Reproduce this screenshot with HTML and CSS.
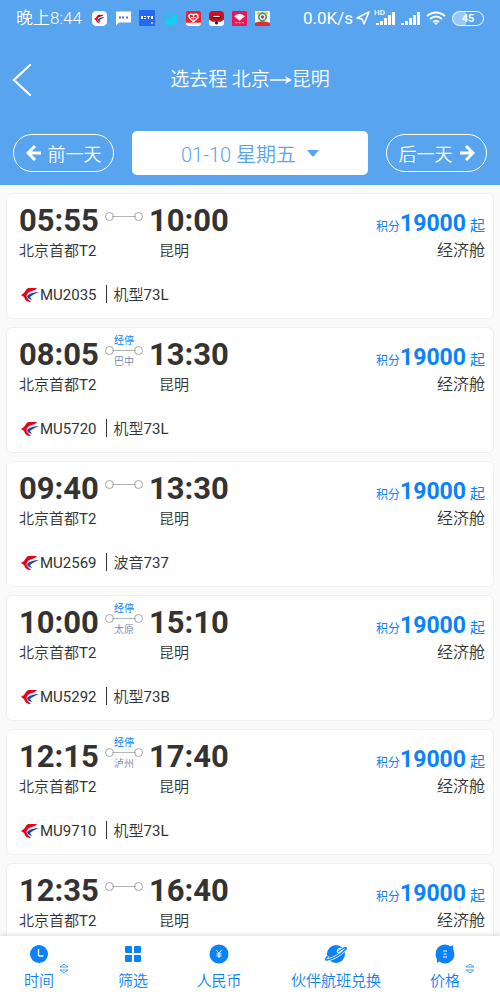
FILE: index.html
```html
<!DOCTYPE html>
<html lang="zh-CN">
<head>
  <meta charset="UTF-8">
  <meta name="viewport" content="width=device-width, initial-scale=1.0">
  <title>选去程 北京→昆明</title>
  <link rel="stylesheet" href="styles.css">
</head>
<body>

<svg class="sprite" aria-hidden="true">
  <symbol id="swallow" viewBox="0 0 18 16">
    <path d="M16 1H8Q6 1 5 3L3 6 0 8l3 2c1 3 3 5 7 5L7 12C5 10 5 8 7 6c2-2 5-2 7-3z" fill="#e60019"/>
    <path d="M18 5C13 5 9 6 6 9c0 2 2 3 5 4L9 10c2-2 5-3 9-5z" fill="#1d4a9c"/>
  </symbol>
  <symbol id="signal" viewBox="0 0 19 14">
    <path d="M0 14v-2h3v2zM4 14v-4h3v4zM8 14V7h3v7zM12 14V4h3v10zM16 14V1h3v13z" fill="#fff"/>
  </symbol>
  <symbol id="sort" viewBox="0 0 10 11">
    <path d="M1 4l4-3 4 3zM1 7l4 3 4-3z" fill="none" stroke="#4aa0f5" stroke-width="1"/>
  </symbol>
</svg>

<header class="header">
  <div class="status">
    <div class="status-left">
      <span class="clock">晚上8:44</span>
      <svg class="app" viewBox="0 0 14 14"><rect width="14" height="14" rx="4" fill="#fff"/><use href="#swallow" x="2" y="3" width="10" height="9"/></svg>
      <svg class="app app-chat" viewBox="0 0 16 15"><path d="M1 1h15v11H4l-3 3z" fill="#fff"/><path d="M4 6h2v2H4zM7 6h2v2H7zM11 6h2v2h-2z" fill="#4778cc"/></svg>
      <svg class="app app-blue" viewBox="0 0 16 16"><rect width="16" height="16" rx="1" fill="#2468f2"/><path d="M2 6h2v3H2zM5 6h2v1H5zM5 8h2v1H5zM8 6h3v1H8zM9 7h1v2H9zM12 6h2v3h-2z" fill="#fff"/><circle cx="13" cy="13" r="1" fill="#ffd84a"/></svg>
      <svg class="app" viewBox="0 0 14 14"><circle cx="7" cy="7" r="6.5" fill="#18cdec"/><path d="M1 10C-1 2 7-2 12 3z" fill="#3db2f0"/></svg>
      <svg class="app" viewBox="0 0 14 14"><rect width="14" height="14" rx="2" fill="#e6232e"/><path d="M7 10L3 6c-1-3 2-4 4-2 2-2 5-1 4 2z" fill="none" stroke="#fff" stroke-width="1.3"/><path d="M5 6h4M7 5v3" stroke="#fff"/><path d="M0 11h14v1a2 2 0 0 1-2 2H2a2 2 0 0 1-2-2z" fill="#fff"/></svg>
      <svg class="app" viewBox="0 0 14 14"><rect width="14" height="14" rx="3" fill="#fff"/><path d="M3 0h8q3 0 3 3v5l-3 2H3L0 8V3q0-3 3-3z" fill="#d50b20"/><path d="M3 4h8v3H3z" fill="#631018"/><path d="M4 5h6" stroke="#fff"/><circle cx="7" cy="11" r="1.5" fill="#222"/></svg>
      <svg class="app" viewBox="0 0 14 14"><rect width="14" height="14" rx="1" fill="#f01456"/><path d="M2 5q5-5 10 0L7 9z" fill="#fff"/><path d="M3 11h2M6 11h2M9 11h2" stroke="#ffb4c8"/></svg>
      <svg class="app" viewBox="0 0 14 14"><rect width="14" height="14" rx="1" fill="#fff"/><path d="M2 3l2-2M12 3l-2-2" stroke="#f4bc28" stroke-width="2"/><circle cx="7" cy="5.5" r="3.5" fill="none" stroke="#2ea05a" stroke-width="1.5"/><circle cx="7" cy="5.5" r="1.5" fill="#e52a35"/><path d="M0 11q7-3 14 0v3H0z" fill="#e52a35"/></svg>
    </div>
    <div class="status-right">
      <span class="speed">0.0K/s</span>
      <svg class="locate" viewBox="0 0 14 14"><path d="M1 7l12-6-5 12-2-5z" fill="none" stroke="#fff" stroke-width="1.5" stroke-linejoin="round"/></svg>
      <span class="hd-signal"><svg class="signal" viewBox="0 0 19 14"><use href="#signal"/></svg><span class="hd">HD</span></span>
      <svg class="signal" viewBox="0 0 19 14"><use href="#signal"/></svg>
      <svg class="wifi" viewBox="0 0 20 14"><path d="M1 5q9-7 18 0M4 8q6-5 12 0M7 11q3-2 6 0" fill="none" stroke="#fff" stroke-width="2"/><path d="M8 12l2 2 2-2q-2-1-4 0z" fill="#fff"/></svg>
      <span class="battery">45</span>
    </div>
  </div>

  <div class="title-bar">
    <button class="back" type="button" aria-label="返回">
      <svg viewBox="0 0 20 34"><path d="M18 2L2 17l16 15" fill="none" stroke="#fff" stroke-width="2.2" stroke-linecap="round"/></svg>
    </button>
    <h1 class="title">选去程 北京<svg viewBox="0 0 22 12"><path d="M0 6h18" stroke="#fff" stroke-width="1.5"/><path d="M15 2l7 4-7 4 2-4z" fill="#fff"/></svg>昆明</h1>
  </div>

  <div class="days">
    <button class="day-btn" type="button">
      <svg viewBox="0 0 16 18"><path d="M15 9H2M9 2L2 9l7 7" fill="none" stroke="#fff" stroke-width="3"/></svg>
      前一天
    </button>
    <button class="date-btn" type="button">
      01-10 星期五
      <svg viewBox="0 0 12 7"><path d="M0 0h12L7 6q-1 1-2 0z" fill="#58a4ef"/></svg>
    </button>
    <button class="day-btn" type="button">
      后一天
      <svg viewBox="0 0 16 18"><path d="M1 9h13M7 2l7 7-7 7" fill="none" stroke="#fff" stroke-width="3"/></svg>
    </button>
  </div>
</header>

<main class="list" id="list"></main>

<nav class="tabs">
  <button class="tab" type="button">
    <svg class="tab-icon" viewBox="0 0 20 20"><circle cx="10" cy="10" r="9" fill="#0b82f8"/><path d="M9.5 5v6q0 1 1 1h4" fill="none" stroke="#fff" stroke-width="1.3"/></svg>
    <span class="tab-label">时间</span>
    <svg class="sort" viewBox="0 0 10 11"><use href="#sort"/></svg>
  </button>
  <button class="tab" type="button">
    <svg class="tab-icon" viewBox="0 0 20 20"><path d="M3 2h5q1 0 1 1v6H3q-1 0-1-1V3q0-1 1-1zM12 2h5q1 0 1 1v5q0 1-1 1h-6V3q0-1 1-1zM2 11h7v6q0 1-1 1H3q-1 0-1-1zM11 11h7v6q0 1-1 1h-5q-1 0-1-1z" fill="#0b82f8"/></svg>
    <span class="tab-label">筛选</span>
  </button>
  <button class="tab" type="button">
    <svg class="tab-icon" viewBox="0 0 20 20"><circle cx="10" cy="10" r="9.5" fill="#0b82f8"/><path d="M7.500 6l2.500 3.500L12.500 6M10 9.500V14M7.500 10h5M7.500 12h5" fill="none" stroke="#fff" stroke-width="1"/></svg>
    <span class="tab-label">人民币</span>
  </button>
  <button class="tab" type="button">
    <svg class="tab-icon tab-planet" viewBox="0 0 24 20"><circle cx="12" cy="10" r="9" fill="#0b82f8"/><path d="M4 12c-3 3-3 4-1 4 5-1 13-5 19-11 1-1 0-2-2-1l-6 4" fill="none" stroke="#fff" stroke-width="3"/><path d="M4 12c-3 3-3 4-1 4 5-1 13-5 19-11 1-1 0-2-2-1l-6 4" fill="none" stroke="#0b82f8" stroke-width="1.500"/><path d="M17 4q-4 0-4 4 2 2 5-2" fill="none" stroke="#fff"/></svg>
    <span class="tab-label">伙伴航班兑换</span>
  </button>
  <button class="tab" type="button">
    <svg class="tab-icon" viewBox="0 0 20 20"><circle cx="10" cy="10" r="9.5" fill="#0b82f8"/><path d="M15 3l3-2v5zM5 17l-3 2v-5z" fill="#0b82f8"/><path d="M8 7h4M8.500 10h3M8 13h4" stroke="#fff"/></svg>
    <span class="tab-label">价格</span>
    <svg class="sort" viewBox="0 0 10 11"><use href="#sort"/></svg>
  </button>
</nav>

<script>
const flights = [
  { dep: '05:55', arr: '10:00', no: 'MU2035', maker: '机型', model: '73L' },
  { dep: '08:05', arr: '13:30', no: 'MU5720', maker: '机型', model: '73L', stop: '巴中' },
  { dep: '09:40', arr: '13:30', no: 'MU2569', maker: '波音', model: '737' },
  { dep: '10:00', arr: '15:10', no: 'MU5292', maker: '机型', model: '73B', stop: '太原' },
  { dep: '12:15', arr: '17:40', no: 'MU9710', maker: '机型', model: '73L', stop: '泸州' },
  { dep: '12:35', arr: '16:40' }
];

function flightRow(f) {
  if (!f.no) return '';
  return `
    <div class="flight">
      <svg class="logo" viewBox="0 0 18 16"><use href="#swallow"/></svg>
      <span class="flight-no">${f.no}</span>
      <span class="plane">${f.maker}<span class="latin">${f.model}</span></span>
    </div>`;
}

document.getElementById('list').innerHTML = flights.map(f => `
  <article class="card">
    <div class="route">
      <div class="place">
        <div class="time">${f.dep}</div>
        <div class="city">北京首都<span class="latin">T2</span></div>
      </div>
      <div class="link">
        <span class="stop-tag">${f.stop ? '经停' : ''}</span>
        <span class="line"></span>
        <span class="stop-city">${f.stop || ''}</span>
      </div>
      <div class="place place-to">
        <div class="time">${f.arr}</div>
        <div class="city">昆明</div>
      </div>
      <div class="fare">
        <div class="price">积分<b>19000</b><span>起</span></div>
        <div class="cabin">经济舱</div>
      </div>
    </div>
    ${flightRow(f)}
  </article>
`).join('');
</script>

</body>
</html>
```

FILE: styles.css
```css
:root {
  --header: #58a4ef;
  --blue: #0b82f8;
  --text: #333;
}
* { margin: 0; padding: 0; box-sizing: border-box; }
body {
  height: 100vh;
  display: flex;
  flex-direction: column;
  overflow: hidden;
  background: #fafafa;
  color: var(--text);
  font-family: Roboto, "Noto Sans CJK SC", sans-serif;
}
button { border: none; background: none; font: inherit; color: inherit; cursor: pointer; }
svg { display: block; flex: none; }
.sprite { position: absolute; width: 0; height: 0; }
.latin { font-weight: 400; }

/* header */
.header { flex: none; background: var(--header); color: #fff; padding-bottom: 10px; }
.status {
  height: 36px;
  padding: 0 16px;
  display: flex;
  align-items: center;
  justify-content: space-between;
}
.status-left { display: flex; align-items: center; gap: 8px; }
.status-right { display: flex; align-items: center; gap: 6px; }
.clock, .speed { font-size: 17px; line-height: 24px; }
.clock { font-weight: 350; margin-right: 2px; }
.speed { margin-right: -3px; }
.app { width: 15px; height: 15px; }
.app-chat, .app-blue { width: 16px; height: 16px; }
.locate { width: 14px; height: 14px; }
.hd-signal { position: relative; }
.hd { position: absolute; left: -2px; top: -2px; font-size: 8px; line-height: 8px; font-weight: 500; }
.signal { width: 19px; height: 14px; }
.wifi { width: 20px; height: 14px; }
.battery {
  width: 32px;
  border: 1px solid #fff;
  border-radius: 8px;
  background: linear-gradient(90deg, rgba(255, 255, 255, 0.4) 45%, transparent 45%);
  font-size: 11px;
  line-height: 13px;
  font-weight: 700;
  text-align: center;
}
.title-bar {
  height: 86px;
  padding: 1px 12px 0;
  display: grid;
  grid-template-columns: 1fr auto 1fr;
  align-items: center;
}
.back { justify-self: start; }
.back svg { width: 20px; height: 34px; }
.title { display: flex; align-items: center; font-size: 19px; line-height: 28px; font-weight: 350; white-space: pre; }
.title svg { width: 22px; height: 12px; }
.days { display: flex; align-items: center; gap: 18px; padding: 9px 13px 0; }
.day-btn {
  width: 101px;
  height: 38px;
  border: 1px solid #fff;
  border-radius: 19px;
  display: flex;
  align-items: center;
  justify-content: center;
  gap: 6px;
  font-size: 18px;
  font-weight: 350;
}
.day-btn svg { width: 16px; height: 18px; }
.date-btn {
  flex: 1;
  height: 44px;
  border-radius: 5px;
  background: #fff;
  color: var(--header);
  display: flex;
  align-items: center;
  justify-content: center;
  gap: 11px;
  font-size: 20px;
  font-weight: 350;
}
.date-btn svg { width: 12px; height: 7px; }

/* flight list */
.list {
  flex: 1;
  min-height: 0;
  overflow: hidden;
  padding: 8px 6px;
  display: flex;
  flex-direction: column;
  gap: 8px;
}
.card {
  flex: none;
  min-height: 126px;
  background: #fff;
  border: 1px solid #f0f0f0;
  border-radius: 6px;
  padding: 9px 8px 11px 12px;
}
.route { display: flex; }
.time { font-size: 31px; line-height: 36px; font-weight: 700; }
.city { font-size: 15px; line-height: 24px; font-weight: 350; }
.cabin { font-size: 16px; line-height: 24px; font-weight: 350; }
.place-to .city { padding-left: 10px; }
.link {
  width: 38px;
  margin: 0 6px;
  display: flex;
  flex-direction: column;
  text-align: center;
  font-size: 10px;
  line-height: 14px;
}
.stop-tag { height: 10px; line-height: 8px; color: var(--blue); }
.stop-city { padding-top: 1px; color: #7585a5; font-weight: 350; }
.line {
  height: 7px;
  display: flex;
  align-items: center;
  justify-content: space-between;
  background: linear-gradient(#b5b5b5, #b5b5b5) center / 24px 1px no-repeat;
}
.line::before, .line::after {
  content: "";
  width: 7px;
  height: 7px;
  border: 1px solid #a5a5a5;
  border-radius: 50%;
}
.fare { margin-left: auto; text-align: right; }
.price { height: 36px; padding-top: 5px; font-size: 12px; line-height: 32px; color: var(--blue); }
.price b { font-size: 23px; line-height: 32px; }
.price span { font-size: 15px; margin-left: 4px; }
.flight {
  margin-top: 20px;
  display: flex;
  align-items: center;
  font-size: 15px;
  line-height: 24px;
}
.logo { width: 18px; height: 16px; margin: 0 1px 0 2px; }
.flight-no { padding-right: 10px; margin-right: 7px; position: relative; }
.flight-no::after {
  content: "";
  position: absolute;
  right: 0;
  top: 2px;
  width: 1px;
  height: 18px;
  background: var(--text);
}
.plane { font-weight: 350; }

/* bottom bar */
.tabs {
  flex: none;
  display: grid;
  grid-template-columns: 78fr 110fr 62fr 172fr 46fr;
  padding: 8px 32px 7px 0;
  background: #fff;
  box-shadow: 0 -1px 5px rgba(0, 0, 0, 0.15);
  color: var(--blue);
  z-index: 1;
}
.tab {
  display: flex;
  flex-direction: column;
  align-items: center;
  position: relative;
  font-size: 15px;
  line-height: 24px;
  font-weight: 350;
  white-space: nowrap;
}
.tab-icon { width: 20px; height: 20px; margin-bottom: 5px; }
.tab-planet { width: 24px; }
.sort { position: absolute; left: 50%; top: 19px; width: 10px; height: 11px; margin-left: 20px; }
```
